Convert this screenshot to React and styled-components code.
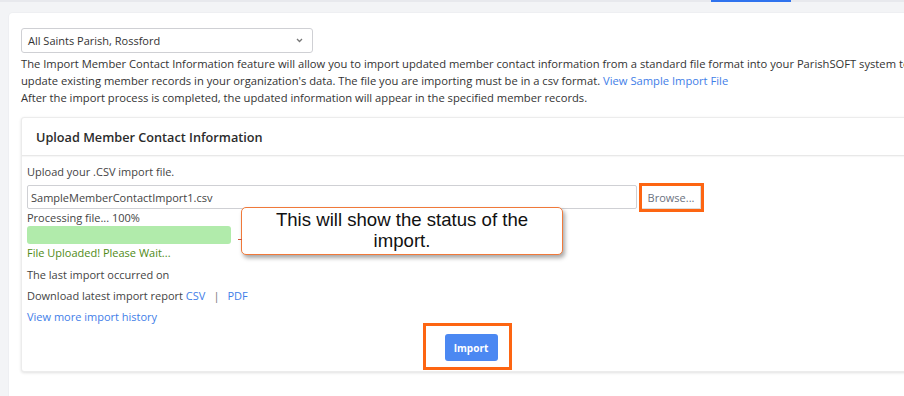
import React from "react";
import styled, { createGlobalStyle } from "styled-components";

const Global = createGlobalStyle`
  html, body { margin: 0; padding: 0; }
  body {
    background: #f3f4f6;
    font-family: "Open Sans", "Noto Sans", sans-serif;
    overflow: hidden;
    width: 904px;
    height: 396px;
  }
`;

const Page = styled.div`
  width: 904px;
  height: 396px;
  overflow: hidden;
  background: #f3f4f6;
`;

const TopBar = styled.div`
  height: 13px;
  display: flex;
  border-top: 2px solid #e8e9ed;
  box-sizing: border-box;
`;

const ActiveTab = styled.div`
  margin-left: 711px;
  margin-top: -2px;
  width: 80px;
  height: 2px;
  background: #2f73ee;
`;

const Card = styled.div`
  margin-left: 9px;
  width: 922px;
  height: 400px;
  background: #fff;
  border-top-left-radius: 4px;
  box-shadow: 0 0 0 1px #eeeff2;
  padding: 15px 12px;
  box-sizing: border-box;
`;

const Select = styled.div`
  width: 292px;
  height: 25px;
  box-sizing: border-box;
  border: 1px solid #cfd0d4;
  border-radius: 3px;
  display: flex;
  align-items: center;
  justify-content: space-between;
  padding: 0 9px 0 6px;
  font-size: 11px;
  color: #333;
`;

const Description = styled.div`
  margin-top: 2px;
  font-size: 11.2px;
  line-height: 17px;
  color: #333;
`;

const Line = styled.div`
  white-space: nowrap;
`;

const Link = styled.a`
  color: #3f7ee8;
  text-decoration: none;
  cursor: pointer;
`;

const Panel = styled.div`
  position: relative;
  margin-top: 11px;
  width: 898px;
  border: 1px solid #ececec;
  border-radius: 3px;
  box-shadow: 0 1px 3px rgba(0, 0, 0, 0.12);
  background: #fff;
`;

const PanelHeader = styled.div`
  height: 38px;
  box-sizing: border-box;
  display: flex;
  align-items: center;
  padding-left: 14px;
  border-bottom: 1px solid #e8e8e8;
  box-shadow: 0 1px 1px rgba(0, 0, 0, 0.03);
  font-size: 12.7px;
  font-weight: 600;
  color: #2b2b2b;
`;

const PanelBody = styled.div`
  padding: 7px 5px 10px;
  font-size: 11px;
  line-height: 17px;
  color: #444;
`;

const Text = styled.div`
  color: ${(p) => p.$color || "#444"};
  margin-top: ${(p) => p.$mt || 0}px;
`;

const FileRow = styled.div`
  margin-top: 5px;
  display: flex;
  align-items: center;
  gap: 4px;
`;

const FileInput = styled.div`
  width: 610px;
  height: 24px;
  box-sizing: border-box;
  border: 1px solid #cfd0d4;
  border-radius: 2px;
  padding-left: 3px;
  display: flex;
  align-items: center;
  color: #444;
`;

const Highlight = styled.div`
  position: relative;
  &::after {
    content: "";
    position: absolute;
    top: ${(p) => p.$t}px;
    left: ${(p) => p.$l}px;
    right: ${(p) => p.$r}px;
    bottom: ${(p) => p.$b}px;
    border: 3px solid #fd6512;
    pointer-events: none;
  }
`;

const BrowseButton = styled.div`
  width: 60px;
  height: 24px;
  box-sizing: border-box;
  border: 1px solid #dcdcdc;
  display: flex;
  align-items: center;
  justify-content: center;
  color: #6b7280;
  background: #fff;
`;

const ProgressTrack = styled.div`
  width: 204px;
  height: 18px;
  border-radius: 3px;
  background: #b1ebab;
`;

const Sep = styled.span`
  color: #777;
  margin: 0 8px;
`;

const ButtonRow = styled.div`
  margin-top: 9px;
  display: flex;
  justify-content: center;
`;

const ImportButton = styled.button`
  width: 53px;
  height: 27px;
  border: none;
  border-radius: 3px;
  background: #4b88f2;
  color: #fff;
  font-family: "Open Sans", sans-serif;
  font-weight: 700;
  font-size: 10px;
  padding: 0;
`;

const Callout = styled.div`
  position: absolute;
  left: 219px;
  top: 89px;
  width: 322px;
  height: 48px;
  box-sizing: border-box;
  border: 1px solid #f0793a;
  border-radius: 5px;
  background: #fff;
  box-shadow: 2px 3px 4px rgba(0, 0, 0, 0.35);
  font-family: "Liberation Sans", Arial, sans-serif;
  font-size: 18.6px;
  line-height: 21px;
  color: #111;
  text-align: center;
  padding: 1px 24px 0;
  &::before {
    content: "";
    position: absolute;
    left: -4px;
    top: 31px;
    width: 4px;
    height: 1px;
    background: #d2553a;
  }
`;

const Chevron = () => (
  <svg width="7" height="5" viewBox="0 0 7 5">
    <path d="M1 1l2.5 2.5L6 1" fill="none" stroke="#777" strokeWidth="1.3" />
  </svg>
);

export default function App() {
  return (
    <Page>
      <Global />
      <TopBar>
        <ActiveTab />
      </TopBar>
      <Card>
        <Select>
          <span>All Saints Parish, Rossford</span>
          <Chevron />
        </Select>
        <Description>
          <Line>
            The Import Member Contact Information feature will allow you to import updated member contact
            information from a standard file format into your ParishSOFT system to
          </Line>
          <Line>
            update existing member records in your organization's data. The file you are importing must be in a
            csv format. <Link>View Sample Import File</Link>
          </Line>
          <Line>
            After the import process is completed, the updated information will appear in the specified member
            records.
          </Line>
        </Description>
        <Panel>
          <PanelHeader>Upload Member Contact Information</PanelHeader>
          <PanelBody>
            <Text>Upload your .CSV import file.</Text>
            <FileRow>
              <FileInput>SampleMemberContactImport1.csv</FileInput>
              <Highlight $t={-2} $l={-2} $r={-3} $b={-3}>
                <BrowseButton>Browse...</BrowseButton>
              </Highlight>
            </FileRow>
            <Text>Processing file... 100%</Text>
            <ProgressTrack />
            <Text $color="#4f8a16">File Uploaded! Please Wait...</Text>
            <Text $mt={5}>The last import occurred on</Text>
            <Text $mt={4}>
              Download latest import report <Link>CSV</Link>
              <Sep>|</Sep>
              <Link>PDF</Link>
            </Text>
            <Text $mt={4}>
              <Link>View more import history</Link>
            </Text>
            <ButtonRow>
              <Highlight $t={-11} $l={-22} $r={-14} $b={-9}>
                <ImportButton>Import</ImportButton>
              </Highlight>
            </ButtonRow>
          </PanelBody>
          <Callout>This will show the status of the import.</Callout>
        </Panel>
      </Card>
    </Page>
  );
}
